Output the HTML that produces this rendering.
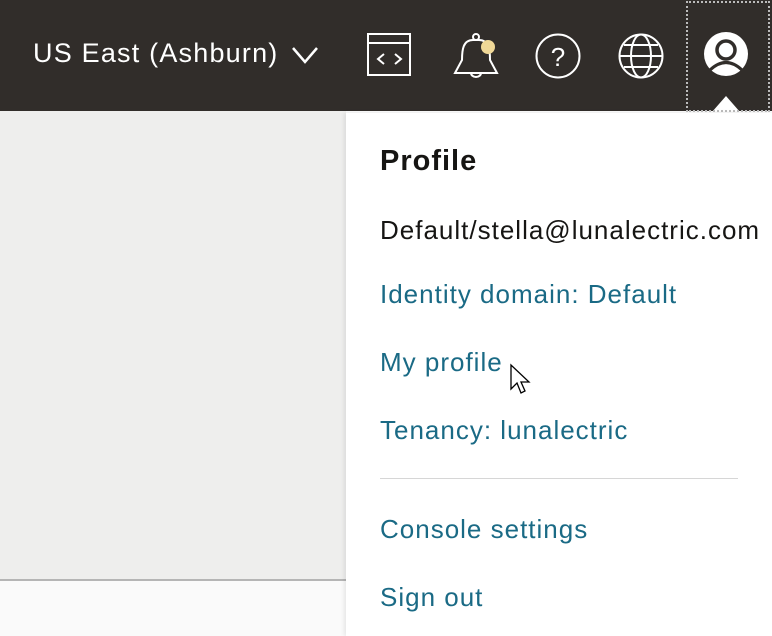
<!DOCTYPE html>
<html><head><style>
body{margin:0;width:772px;height:636px;overflow:hidden;position:relative;font-family:"Liberation Sans",sans-serif;background:#fafafa}
.hdr{position:absolute;left:0;top:0;width:772px;height:111px;background:#312d2a}
.bg{position:absolute;left:0;top:111px;width:346px;height:469px;background:#eeeeed}
.line{position:absolute;left:0;top:579px;width:346px;height:2px;background:#b5b5b5}
.region{position:absolute;left:33px;top:38px;color:#fff;font-size:27px;letter-spacing:1.2px}
.panel{position:absolute;left:346px;top:113px;width:426px;height:523px;background:#fff;box-shadow:-2px 0 4px rgba(0,0,0,.08)}
.t{position:absolute;left:380px;font-size:26px;letter-spacing:1px;color:#1a6a85;white-space:nowrap}
.dots{position:absolute;left:686px;top:1px;width:80px;height:107px;border:2px dotted #bbb}
</style></head><body>
<div class="hdr"></div>
<div class="bg"></div><div class="line"></div>
<div class="region">US East (Ashburn)</div>
<svg style="position:absolute;left:0;top:0" width="772" height="112">
<polyline points="293,48 305,62 317,48" fill="none" stroke="#fff" stroke-width="2.5"/>
<g fill="none" stroke="#fff" stroke-width="2">
<rect x="368" y="34" width="42" height="41"/><line x1="368" y1="43" x2="410" y2="43"/>
<polyline points="384,54 378,59 384,64"/><polyline points="395,54 401,59 395,64"/>
<path d="M473,40 C463,40 462,50 462,60 L455,73 L497,73 L490,60 C490,50 489,40 479,40 Z"/>
<circle cx="476" cy="37" r="3"/><path d="M471,73 a5,4 0 0 0 10,0"/>
<circle cx="558" cy="56" r="21.5"/>
<circle cx="641" cy="56" r="21.5"/><ellipse cx="641" cy="56" rx="10" ry="21.5"/>
<line x1="620" y1="56" x2="662" y2="56"/><path d="M624,45 H658 M624,67 H658"/>
</g>
<text x="558" y="66" fill="#fff" font-size="26" text-anchor="middle" font-family="Liberation Sans">?</text>
<circle cx="488" cy="47" r="7" fill="#f0d897"/>
<circle cx="726" cy="54" r="22" fill="#fff"/>
<circle cx="726" cy="50" r="9" fill="none" stroke="#312d2a" stroke-width="3.5"/>
<path d="M710,70 Q726,55 742,70" fill="none" stroke="#312d2a" stroke-width="3"/>
<polygon points="726,96 712,112 740,112" fill="#fff"/>
</svg>
<div class="dots"></div>
<div class="panel"></div>
<div class="t" style="top:145px;font-weight:bold;font-size:29px;color:#161513">Profile</div>
<div class="t" style="top:215px;color:#161513">Default/stella@lunalectric.com</div>
<div class="t" style="top:279px">Identity domain: Default</div>
<div class="t" style="top:347px">My profile</div>
<div class="t" style="top:415px">Tenancy: lunalectric</div>
<div style="position:absolute;left:380px;top:478px;width:358px;height:1px;background:#d6d6d6"></div>
<div class="t" style="top:514px">Console settings</div>
<div class="t" style="top:582px">Sign out</div>
<svg style="position:absolute;left:509px;top:363px" width="22" height="34"><path d="M2,2 L2,26 L8,20 L12,30 L16,28 L12,19 L20,19 Z" fill="#fff" stroke="#000" stroke-width="1.3"/></svg>
</body></html>
